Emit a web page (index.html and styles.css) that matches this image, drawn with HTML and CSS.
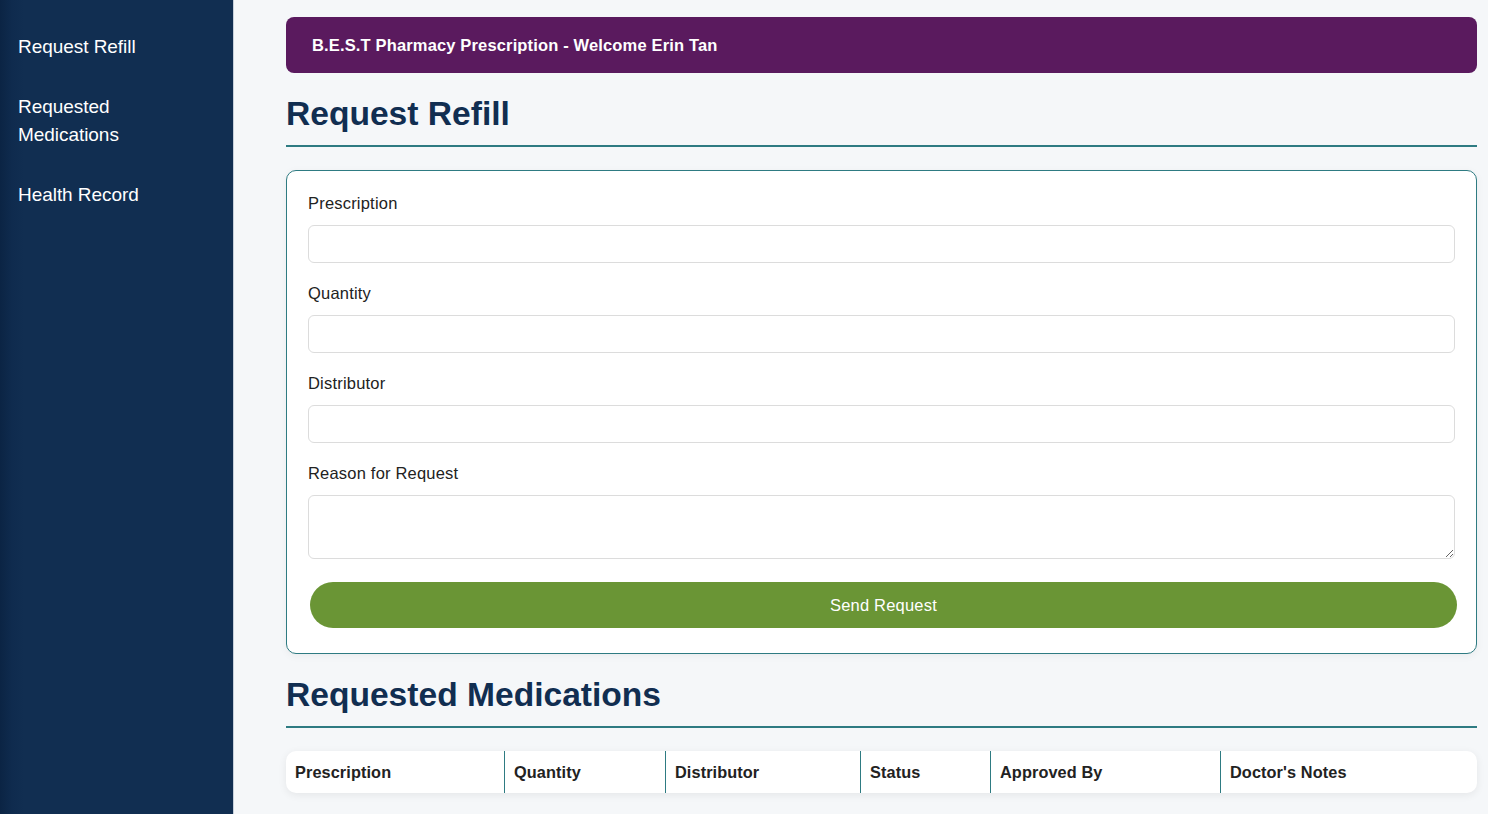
FILE: index.html
```html
<!DOCTYPE html>
<html lang="en">
<head>
<meta charset="utf-8">
<title>B.E.S.T Pharmacy Prescription</title>
<link rel="stylesheet" href="styles.css">
</head>
<body>
<div class="layout">
  <nav class="sidebar">
    <a class="nav-link" href="#refill">Request Refill</a>
    <a class="nav-link" href="#requested">Requested Medications</a>
    <a class="nav-link" href="#health">Health Record</a>
  </nav>
  <main class="main">
    <header class="topbar">B.E.S.T Pharmacy Prescription - Welcome Erin Tan</header>

    <h2 class="section-title" id="refill">Request Refill</h2>
    <form class="card">
      <label class="field-label" for="rx">Prescription</label>
      <input class="field-input" id="rx" type="text">
      <label class="field-label" for="qty">Quantity</label>
      <input class="field-input" id="qty" type="text">
      <label class="field-label" for="dist">Distributor</label>
      <input class="field-input" id="dist" type="text">
      <label class="field-label" for="reason">Reason for Request</label>
      <textarea class="field-input field-textarea" id="reason"></textarea>
      <button class="send-btn" type="button">Send Request</button>
    </form>

    <h2 class="section-title" id="requested">Requested Medications</h2>
    <table class="med-table">
      <thead>
        <tr>
          <th class="col-rx">Prescription</th>
          <th class="col-qty">Quantity</th>
          <th class="col-dist">Distributor</th>
          <th class="col-status">Status</th>
          <th class="col-approved">Approved By</th>
          <th class="col-notes">Doctor's Notes</th>
        </tr>
      </thead>
    </table>
  </main>
</div>
</body>
</html>
```

FILE: styles.css
```css
* { box-sizing: border-box; }

html, body {
  margin: 0;
  padding: 0;
  background: #f5f7f9;
  font-family: "Liberation Sans", Arial, Helvetica, sans-serif;
}

.layout {
  display: flex;
  min-height: 100vh;
}

.sidebar {
  flex: 0 0 234px;
  width: 234px;
  background: linear-gradient(to right, #0b2444 0, #0f2b4e 12px, #112e51 24px);
  border-right: 1px solid #c7d0da;
  padding-top: 17px;
  display: flex;
  flex-direction: column;
}

.nav-link {
  display: block;
  color: #ffffff;
  text-decoration: none;
  font-size: 19px;
  line-height: 28px;
  padding: 16px 40px 16px 18px;
  letter-spacing: -0.05px;
}

.main {
  flex: 1;
  padding: 17px 11px 20px 52px;
}

.topbar {
  height: 56px;
  background: #5a1a5e;
  border-radius: 8px;
  color: #ffffff;
  font-weight: bold;
  font-size: 16.5px;
  letter-spacing: 0.15px;
  display: flex;
  align-items: center;
  padding: 0 26px;
}

.section-title {
  margin: 22px 0 23px;
  padding-bottom: 12px;
  border-bottom: 2px solid #2e7b82;
  color: #112e51;
  font-size: 33.6px;
  line-height: 38px;
  font-weight: bold;
}

.card {
  background: #ffffff;
  border: 1px solid #2e7b82;
  border-radius: 10px;
  padding: 23px 21px 25px;
  display: flex;
  flex-direction: column;
  box-shadow: 0 2px 8px rgba(0, 0, 0, 0.05);
}

.field-label {
  display: block;
  font-size: 16.5px;
  letter-spacing: 0.2px;
  line-height: 18px;
  color: #222222;
  margin-bottom: 13px;
}

.field-input {
  display: block;
  width: 100%;
  height: 38px;
  border: 1px solid #dcdcdc;
  border-radius: 6px;
  background: #ffffff;
  margin: 0 0 21px;
  font-family: inherit;
  font-size: 16px;
  padding: 6px 10px;
}

.field-textarea {
  height: 64px;
  resize: vertical;
  margin-bottom: 23px;
}

.send-btn {
  display: block;
  width: 100%;
  margin-left: 2px;
  height: 46px;
  border: none;
  border-radius: 23px;
  background: #6a9535;
  color: #ffffff;
  font-family: inherit;
  font-size: 16.5px;
  letter-spacing: 0.2px;
  cursor: pointer;
}

.med-table {
  width: 100%;
  table-layout: fixed;
  border-collapse: separate;
  border-spacing: 0;
  background: #ffffff;
  border-radius: 10px;
  box-shadow: 0 2px 8px rgba(0, 0, 0, 0.07);
}

.med-table th {
  text-align: left;
  font-size: 16.3px;
  letter-spacing: 0.1px;
  font-weight: bold;
  color: #222222;
  padding: 12px 9px;
  line-height: 18px;
  border-left: 1px solid #2e7b82;
}

.med-table th:first-child { border-left: none; }

.col-rx { width: 218px; }
.col-qty { width: 161px; }
.col-dist { width: 195px; }
.col-status { width: 130px; }
.col-approved { width: 230px; }
```
